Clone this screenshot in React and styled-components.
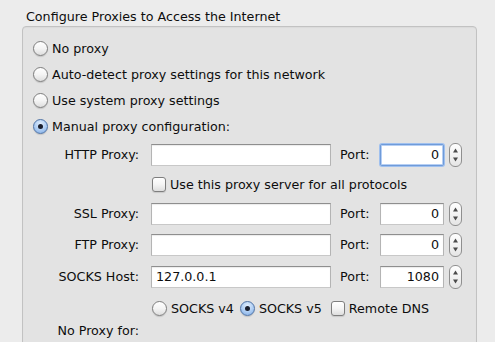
import React from "react";
import styled, { createGlobalStyle } from "styled-components";

const GlobalStyle = createGlobalStyle`
  html, body {
    margin: 0;
    background: #ececec;
    overflow: hidden;
  }
  body {
    font-family: "DejaVu Sans", "Liberation Sans", sans-serif;
    font-size: 12.7px;
    color: #0d0d0d;
  }
`;

const Page = styled.div`
  padding: 9px 0 0 22px;
  width: 455px;
`;

const Title = styled.div`
  line-height: 16px;
  margin: 0 0 1px 4px;
`;

const GroupBox = styled.div`
  box-sizing: border-box;
  height: 340px;
  background: #e3e3e3;
  border: 1px solid #c2c2c2;
  border-radius: 4px;
  box-shadow: inset 0 1px 1px rgba(0, 0, 0, 0.04);
  padding: 8px 0 0 10px;
`;

const RadioList = styled.div`
  display: flex;
  flex-direction: column;
`;

const OptionRow = styled.label`
  display: flex;
  align-items: center;
  height: 26px;
  gap: 4px;
  white-space: nowrap;
  margin-left: ${(p) => p.$ml || 0}px;
`;

const RadioCircle = styled.span`
  box-sizing: border-box;
  flex: none;
  width: 15px;
  height: 15px;
  border-radius: 50%;
  border: 1px solid ${(p) => (p.$on ? "#4f73a6" : "#7e7e7e")};
  background: ${(p) =>
    p.$on
      ? "radial-gradient(circle at 50% 30%, #e2eefc 0%, #acccf3 55%, #7ea9e2 100%)"
      : "linear-gradient(#ffffff, #f4f4f4 50%, #dedede)"};
  box-shadow: 0 1px 1px rgba(0, 0, 0, 0.14);
  display: flex;
  align-items: center;
  justify-content: center;
  &::after {
    content: "";
    display: ${(p) => (p.$on ? "block" : "none")};
    width: 5px;
    height: 5px;
    border-radius: 50%;
    background: #1a1f2e;
  }
`;

const CheckSquare = styled.span`
  box-sizing: border-box;
  flex: none;
  width: 14px;
  height: 15px;
  border-radius: 3px;
  border: 1px solid #7e7e7e;
  background: linear-gradient(#ffffff, #f4f4f4 50%, #dedede);
  box-shadow: 0 1px 1px rgba(0, 0, 0, 0.12);
`;

const Radio = ({ on, children }) => (
  <OptionRow>
    <RadioCircle $on={on} />
    <span>{children}</span>
  </OptionRow>
);

const Check = ({ children, ml }) => (
  <OptionRow $ml={ml}>
    <CheckSquare />
    <span>{children}</span>
  </OptionRow>
);

const ProxyGrid = styled.div`
  display: grid;
  grid-template-columns: 118px 180px 49px 64px 18px;
  grid-template-rows: 29px 30px 31px 32px 31px 23px 22px;
  margin-top: 5px;
  align-items: start;
`;

const FieldLabel = styled.div`
  grid-column: 1;
  height: 22px;
  line-height: 22px;
  text-align: right;
  padding-right: 12px;
  white-space: nowrap;
`;

const PortLabel = styled.div`
  grid-column: 3;
  height: 22px;
  line-height: 22px;
  padding-left: 9px;
  white-space: nowrap;
`;

const TextField = styled.div`
  box-sizing: border-box;
  grid-column: 2;
  height: 22px;
  background: #fff;
  border: 1px solid #b4b4b4;
  border-top-color: #8e8e8e;
  border-bottom-color: #c8c8c8;
  box-shadow: inset 0 1px 1px rgba(0, 0, 0, 0.08);
  padding: 0 4px;
  line-height: 20px;
  white-space: nowrap;
`;

const PortField = styled(TextField)`
  grid-column: 4;
  text-align: right;
  ${(p) =>
    p.$focus &&
    `
    border-color: #6f9bd9;
    border-radius: 2px;
    box-shadow: 0 0 0 1px #9fc0ef, inset 0 0 0 1px #b6cff4;
  `}
`;

const StepperBox = styled.div`
  grid-column: 5;
  margin: -1px 0 0 5px;
  width: 13px;
  height: 24px;
  line-height: 0;
`;

const Stepper = () => (
  <StepperBox>
    <svg width="13" height="24" viewBox="0 0 13 24">
      <defs>
        <linearGradient id="stg" x1="0" y1="0" x2="0" y2="1">
          <stop offset="0" stopColor="#ffffff" />
          <stop offset="0.5" stopColor="#f2f2f2" />
          <stop offset="1" stopColor="#e4e4e4" />
        </linearGradient>
      </defs>
      <rect x="0.5" y="0.5" width="12" height="23" rx="5.5" fill="url(#stg)" stroke="#8f8f8f" />
      <path d="M4 9.5 L6.5 5.5 L9 9.5 Z" fill="#4a4a4a" />
      <path d="M4 14.5 L6.5 18.5 L9 14.5 Z" fill="#4a4a4a" />
    </svg>
  </StepperBox>
);

const SpanRow = styled.div`
  grid-column: 2 / 6;
  margin-left: 1px;
  height: 22px;
  display: flex;
  align-items: center;
  gap: ${(p) => p.$gap || 0}px;
  & > label {
    height: 22px;
  }
`;

const EmptyCell = styled.div`
  grid-column: 2 / 6;
`;

const ProxyRow = ({ label, host, port, focus }) => (
  <>
    <FieldLabel>{label}</FieldLabel>
    <TextField>{host}</TextField>
    <PortLabel>Port:</PortLabel>
    <PortField $focus={focus}>{port}</PortField>
    <Stepper />
  </>
);

export default function App() {
  return (
    <Page>
      <GlobalStyle />
      <Title>Configure Proxies to Access the Internet</Title>
      <GroupBox>
        <RadioList>
          <Radio>No proxy</Radio>
          <Radio>Auto-detect proxy settings for this network</Radio>
          <Radio>Use system proxy settings</Radio>
          <Radio on>Manual proxy configuration:</Radio>
        </RadioList>
        <ProxyGrid>
          <ProxyRow label="HTTP Proxy:" host="" port="0" focus />
          <FieldLabel />
          <SpanRow>
            <Check>Use this proxy server for all protocols</Check>
          </SpanRow>
          <ProxyRow label="SSL Proxy:" host="" port="0" />
          <ProxyRow label="FTP Proxy:" host="" port="0" />
          <ProxyRow label="SOCKS Host:" host="127.0.0.1" port="1080" />
          <FieldLabel />
          <SpanRow $gap={6}>
            <Radio>SOCKS v4</Radio>
            <Radio on>SOCKS v5</Radio>
            <Check ml={3}>Remote DNS</Check>
          </SpanRow>
          <FieldLabel>No Proxy for:</FieldLabel>
          <EmptyCell />
        </ProxyGrid>
      </GroupBox>
    </Page>
  );
}
